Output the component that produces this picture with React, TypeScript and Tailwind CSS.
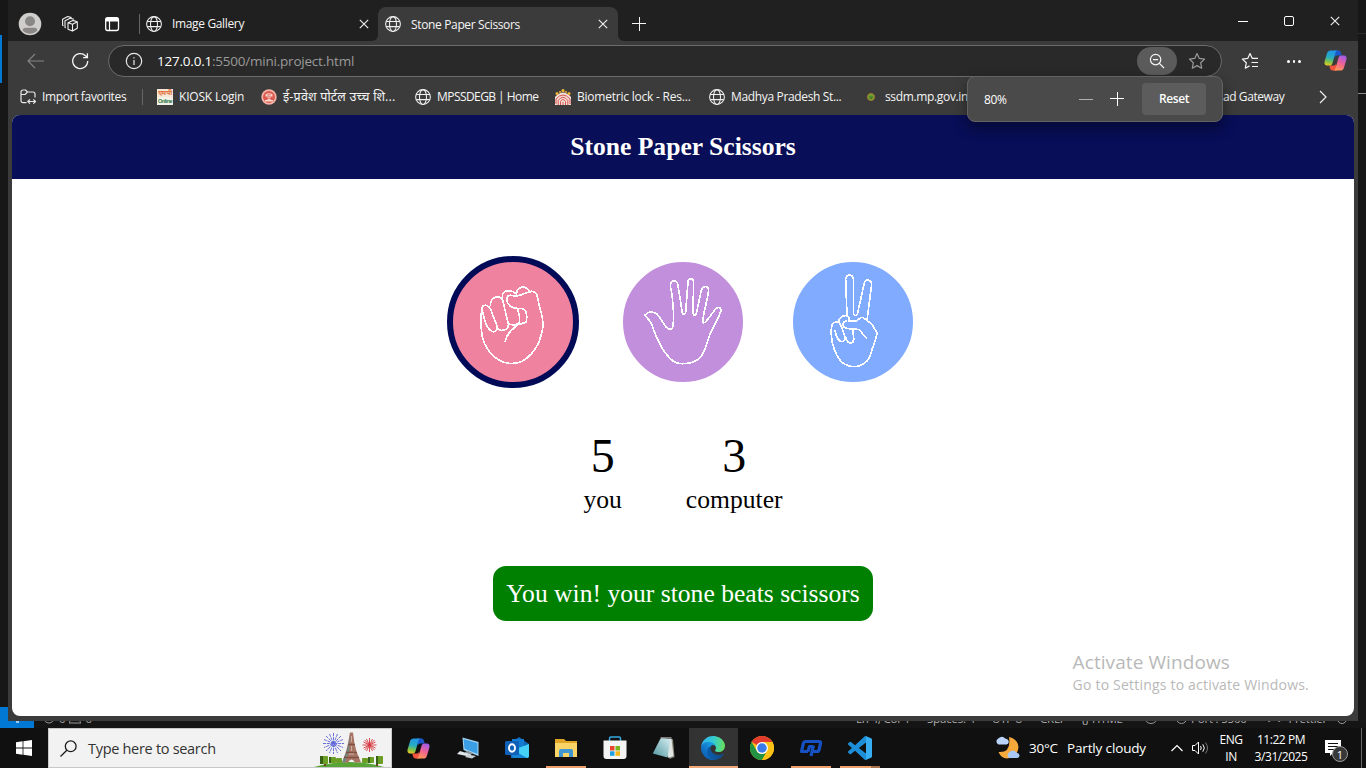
import React from "react";

type P = { className?: string };

const Globe = ({ className = "" }: P) => (
  <svg viewBox="0 0 16 16" className={`h-4 w-4 shrink-0 ${className}`} fill="none" stroke="#f0f0f0" strokeWidth="1.05">
    <circle cx="8" cy="8" r="7.4" />
    <ellipse cx="8" cy="8" rx="3.5" ry="7.4" />
    <path d="M1.2 5.4h13.6M1.2 10.6h13.6" />
  </svg>
);

const Cross = ({ className = "" }: P) => (
  <svg viewBox="0 0 10 10" className={`h-[10px] w-[10px] shrink-0 ${className}`} stroke="#f2f2f2" strokeWidth="1.1">
    <path d="M.8.8l8.4 8.4M9.2.8L.8 9.2" />
  </svg>
);

const Copilot = ({ id }: { id: string }) => (
  <svg viewBox="0 0 24 24" className="h-[23px] w-[23px] shrink-0">
    <defs>
      <linearGradient id={`${id}a`} x1="0.4" y1="0" x2="0.2" y2="1">
        <stop offset="0" stopColor="#2196e8" />
        <stop offset="0.45" stopColor="#28aec0" />
        <stop offset="0.75" stopColor="#86c440" />
        <stop offset="1" stopColor="#f5ca28" />
      </linearGradient>
      <linearGradient id={`${id}b`} x1="0.7" y1="0" x2="0.3" y2="1">
        <stop offset="0" stopColor="#a35bea" />
        <stop offset="0.5" stopColor="#ef6293" />
        <stop offset="1" stopColor="#ff9a55" />
      </linearGradient>
    </defs>
    <path d="M10.5 1.5h4.7c1.4 0 2 .9 2.4 2.1l1 3.1h-4.200c-1.700 0-2.500.8-3 2.300z" fill="#1c57c9" />
    <path d="M13.500 22.500H8.800c-1.400 0-2-.9-2.400-2.100l-1-3.100h4.200c1.700 0 2.500-.8 3-2.300z" fill="#f4533e" />
    <path d="M7.200 1.500h7.300c-1.500 0-2.100 1.100-2.500 2.300L8.900 14.500c-.6 2-1.500 2.800-3.300 2.800H3.300C.9 17.300 0 15.400.6 13.100L3.200 4.500c.6-2 1.800-3 4-3z" fill={`url(#${id}a)`} />
    <path d="M16.800 22.500H9.500c1.500 0 2.100-1.100 2.500-2.300l3.100-10.700c.6-2 1.500-2.800 3.300-2.800h2.300c2.400 0 3.300 1.900 2.700 4.200l-2.600 8.600c-.6 2-1.800 3-4 3z" fill={`url(#${id}b)`} />
  </svg>
);

function TabStrip() {
  return (
    <div className="flex h-[41px] shrink-0 items-center bg-[#202020] text-[12px] text-[#f5f5f5]">
      <svg viewBox="0 0 24 24" className="ml-[10px] mt-[6px] h-6 w-6 shrink-0">
        <circle cx="12" cy="12" r="11.300" fill="#d0cecc" />
        <circle cx="12" cy="9.300" r="5" fill="#8a8886" />
        <path d="M4.700 18.500c0-2 1-2.800 2.800-2.800h9c1.800 0 2.800.8 2.800 2.800a10 10 0 0 1-14.600 0z" fill="#8a8886" />
      </svg>
      <svg viewBox="0 0 18 18" className="ml-[19px] mt-[6px] h-[18px] w-[18px] shrink-0" fill="none" stroke="#f0f0f0" strokeWidth="1.100" strokeLinejoin="round">
        <path d="M7 7.700l4.800-2.300 4.500 1.300v6.600l-4.800 2.800L7 14.300zM7 7.700l4.500 1.600v6.800M11.500 9.300l4.800-2.600" />
        <path d="M4.800 12.800l-.8-.4V5.800l5.200-2.600 3.800 1.100M2.500 10.700l-.9-.500V4.300L6.700 1.500l3.900 1.100" />
      </svg>
      <svg viewBox="0 0 16 16" className="ml-[25px] mt-[6px] h-4 w-4 shrink-0">
        <rect x="1.700" y="1.700" width="12.800" height="12.800" rx="2" fill="none" stroke="#fff" strokeWidth="1.300" />
        <path d="M1.500 5.500V3.500a2 2 0 0 1 2-2h9a2 2 0 0 1 2 2v2z" fill="#fff" />
        <path d="M5.500 5v9" stroke="#fff" strokeWidth="1.200" />
      </svg>
      <div className="ml-[19px] mt-[6px] h-5 w-px bg-[#666]" />
      <Globe className="ml-[6px] mt-[6px]" />
      <span className="ml-[10px] mt-[7px] w-[187px] whitespace-nowrap tracking-[-0.35px]">Image Gallery</span>
      <Cross className="mt-[7px]" />
      <div className="relative ml-[9px] mt-[7px] flex h-[34px] w-[240px] shrink-0 items-center rounded-t-[8px] bg-[#3b3b3b]">
        <svg viewBox="0 0 6 6" className="absolute bottom-0 left-[-6px] h-[6px] w-[6px]"><path d="M6 0v6H0a6 6 0 0 0 6-6z" fill="#3b3b3b" /></svg>
        <svg viewBox="0 0 6 6" className="absolute bottom-0 right-[-6px] h-[6px] w-[6px]"><path d="M0 0v6h6a6 6 0 0 1-6-6z" fill="#3b3b3b" /></svg>
        <Globe className="ml-[7px]" />
        <span className="ml-[10px] mt-px w-[187px] whitespace-nowrap tracking-[-0.35px]">Stone Paper Scissors</span>
        <Cross />
      </div>
      <svg viewBox="0 0 14 14" className="ml-[14px] mt-[6px] h-[14px] w-[14px] shrink-0" stroke="#f5f5f5" strokeWidth="1">
        <path d="M0 6.500h14M7.500 0v14" />
      </svg>
      <div className="flex-1" />
      <div className="mt-[2px] h-px w-[10px] bg-white" />
      <div className="ml-[36px] mt-px h-[10px] w-[10px] rounded-[2px] border border-white" />
      <Cross className="ml-[36px] mr-[18px] mt-px" />
    </div>
  );
}

function Toolbar() {
  return (
    <div className="flex h-[36px] shrink-0 items-start bg-[#3b3b3b] pt-[4px]">
      <svg viewBox="0 0 17 16" className="ml-[19px] mt-[8px] h-4 w-[17px] shrink-0" fill="none" stroke="#858585" strokeWidth="1.100">
        <path d="M17 8H1M8 1L1 8l7 7" />
      </svg>
      <svg viewBox="0 0 18 18" className="ml-[27px] mt-[7px] h-[18px] w-[18px] shrink-0" fill="none" stroke="#f5f5f5" strokeWidth="1.300">
        <path d="M16.700 9a7.500 7.500 0 1 1-2.200-5.200L16.200 5.500M16.400 1.300v4.400h-4.300" />
      </svg>
      <div className="ml-[19px] flex h-[32px] w-[1114px] shrink-0 items-center rounded-full border border-[#6b6b6b] bg-[#292929]">
        <svg viewBox="0 0 18 18" className="ml-[16px] h-[18px] w-[18px] shrink-0" fill="none" stroke="#e8e8e8" strokeWidth="1.200">
          <circle cx="9" cy="9" r="7.700" />
          <path d="M9 8v5M9 5.200v1.400" />
        </svg>
        <span className="ml-[14px] flex-1 whitespace-nowrap text-[13.500px] tracking-[-0.220px] text-[#9a9a9a]">
          <span className="text-white">127.0.0.1</span>:5500/mini.project.html
        </span>
        <div className="flex h-[28px] w-[40px] shrink-0 items-center justify-center rounded-full bg-[#5b5b5b]">
          <svg viewBox="0 0 16 16" className="h-4 w-4" fill="none" stroke="#f5f5f5" strokeWidth="1.200">
            <circle cx="6.600" cy="6.600" r="5.200" />
            <path d="M10.400 10.400L15 15M4 6.600h5.200" />
          </svg>
        </div>
        <svg viewBox="0 0 18 18" className="ml-[11px] mr-[15px] h-[18px] w-[18px] shrink-0" fill="none" stroke="#9a9a9a" strokeWidth="1.200" strokeLinejoin="round">
          <path d="M9 1.500l2.300 4.900 5.300.7-3.900 3.700 1 5.400L9 13.600l-4.700 2.600 1-5.400L1.400 7.100l5.300-.7z" />
        </svg>
      </div>
      <svg viewBox="0 0 18 18" className="ml-[19px] mt-[7px] h-[18px] w-[18px] shrink-0" fill="none" stroke="#f5f5f5" strokeWidth="1.200" strokeLinejoin="round">
        <path d="M11.300 6.400L9 1.500 6.700 6.400l-5.300.7 3.900 3.700-1 5.400L8.500 13.900M11 6.400h6M10.500 10.500H17M11 14.500h6" />
      </svg>
      <div className="ml-[28px] mt-[15px] flex shrink-0 gap-[3px]">
        <i className="h-[2.500px] w-[2.500px] rounded-full bg-white" />
        <i className="h-[2.500px] w-[2.500px] rounded-full bg-white" />
        <i className="h-[2.500px] w-[2.500px] rounded-full bg-white" />
      </div>
      <div className="ml-[23px] mt-[4px]">
        <Copilot id="cb" />
      </div>
    </div>
  );
}

function Bookmarks() {
  return (
    <div className="flex h-[38px] shrink-0 items-center overflow-hidden whitespace-nowrap bg-[#3b3b3b] text-[12px] tracking-[-0.350px] text-[#f5f5f5]">
      <svg viewBox="0 0 17 16" className="ml-[12px] mt-px h-4 w-[17px] shrink-0" fill="none" stroke="#e8e8e8" strokeWidth="1.200" strokeLinejoin="round">
        <path d="M6.500 13.700H3a2 2 0 0 1-2-2V3a2 2 0 0 1 2-2h2.500l2 2h5.500a2 2 0 0 1 2 2v3.500M1 5.500h4L7.500 3M8.300 12.500h6.500M10 10.300l-2.200 2.200 2.200 2.200M13.300 10.300l2.200 2.200-2.200 2.200" />
      </svg>
      <span className="ml-[5px] mt-[2px] w-[100px] shrink-0">Import favorites</span>
      <div className="mt-[2px] h-4 w-px shrink-0 bg-[#666]" />
      <div className="ml-[14px] mt-[2px] flex h-4 w-4 shrink-0 flex-col overflow-hidden bg-[#f4f0e8] text-center leading-none">
        <span className="h-[8px] bg-[#f8e6d6] font-['Noto_Sans',sans-serif] text-[6.500px] font-bold leading-[8px] tracking-[-0.600px] text-[#e06a35]">एम पी</span>
        <span className="font-['Liberation_Sans',sans-serif] text-[5.500px] font-bold leading-[8px] tracking-[-0.500px] text-[#2d7a3c]">Online</span>
      </div>
      <span className="ml-[6px] mt-[2px] w-[82px] shrink-0 tracking-[-0.200px]">KIOSK Login</span>
      <svg viewBox="0 0 16 16" className="mt-[2px] h-4 w-4 shrink-0">
        <circle cx="8" cy="8" r="7.700" fill="#f4b2a8" />
        <circle cx="8" cy="8" r="6" fill="#dc5a50" />
        <path d="M4.500 5.500q3.500-3 7 0v2h-2V11h2.500v1.500H4V11h2.500V7.500h-2z" fill="#f8d8cd" />
        <path d="M7 5h2v3H7zM5 9.500h6" stroke="#dc4b42" strokeWidth=".6" fill="none" />
      </svg>
      <span className="ml-[6px] mt-[2px] w-[132px] shrink-0 text-[12.500px] tracking-[0.220px]">ई-प्रवेश पोर्टल उच्च शि...</span>
      <Globe className="mt-[2px]" />
      <span className="ml-[6px] mt-[2px] w-[118px] shrink-0 tracking-[-0.560px]">MPSSDEGB | Home</span>
      <svg viewBox="0 0 16 16" className="mt-[2px] h-4 w-4 shrink-0" fill="none">
        <path d="M0 16V8q8-9 16 0v8z" fill="#f3ded7" />
        <g stroke="#d5534f" strokeWidth="1">
          <path d="M1 15V10q7-8 14 0v5M3.200 16v-4.500q4.800-6.500 9.600 0V16M5.500 16v-3.500q2.500-4 5 0V16M8 13v3" />
        </g>
        <g fill="#f2b634">
          <circle cx="2" cy="4.500" r="1.500" />
          <circle cx="8" cy="1.600" r="1.600" />
          <circle cx="14" cy="4.500" r="1.500" />
          <circle cx="5" cy="3" r="1" />
          <circle cx="11" cy="3" r="1" />
        </g>
      </svg>
      <span className="ml-[6px] mt-[2px] w-[132px] shrink-0 tracking-[-0.220px]">Biometric lock - Res...</span>
      <Globe className="mt-[2px]" />
      <span className="ml-[6px] mt-[2px] w-[136px] shrink-0">Madhya Pradesh St...</span>
      <svg viewBox="0 0 8 8" className="mt-[2px] h-2 w-2 shrink-0">
        <circle cx="4" cy="4" r="3.500" fill="#69a334" stroke="#a8772d" />
        <path d="M2 4h4M3 5.300h2" stroke="#315f22" strokeWidth=".8" />
      </svg>
      <span className="ml-[10px] mt-[2px] w-[338px] shrink-0">ssdm.mp.gov.in</span>
      <span className="mt-[2px] w-[96px] shrink-0 tracking-[-0.420px]">ad Gateway</span>
      <svg viewBox="0 0 8 14" className="mt-[2px] h-[14px] w-2 shrink-0" fill="none" stroke="#f0f0f0" strokeWidth="1.200">
        <path d="M1 1l6 6-6 6" />
      </svg>
    </div>
  );
}

function ZoomPopup() {
  return (
    <div className="absolute left-[959px] top-[76px] flex h-[46px] w-[256px] items-center rounded-[8px] border border-[#636363] bg-[#4a4a4a] text-[12px] text-white shadow-[0_6px_14px_rgba(0,0,0,0.4)]">
      <span className="ml-[16px] mt-px w-[95px] tracking-[-0.400px]">80%</span>
      <div className="h-px w-[14px] bg-[#b0b0b0]" />
      <svg viewBox="0 0 14 14" className="ml-[17px] h-[14px] w-[14px]" stroke="#fff" strokeWidth="1">
        <path d="M0 6.500h14M7.500 0v14" />
      </svg>
      <div className="ml-[18px] flex h-8 w-[64px] items-center justify-center rounded-[4px] bg-[#5c5c5c] font-semibold tracking-[-0.400px]">Reset</div>
    </div>
  );
}

const Fist = () => (
  <path d="M127 170c7-8 20-3 24 6l20 52c4 12-6 20-15 16-12-5-20-25-24-42l-5-20M151 168c0-10 4-22 14-26 12-3 20 0 23 9l17 70c2 14-8 21-21 20-8-1-13-6-15-13M188 144c-4-12 5-22 19-22 12 0 18 6 25 12M230 134c-2-12 7-24 22-23 10 1 13 8 19 17M205 221c12 5 24 4 31-2 6-6 2-18 1-28l-5-16M272 124c-16 5-30 13-44 14-11 0-20-6-25 1-6 9-1 24 10 31 14 10 26 2 38 7 10 6 10 25 8 39-8 5-24 4-33 14-16 13-28 26-31 47M268 125c8-3 18 0 22 8 6 18 7 38 14 56 4 15 8 38 1 61-8 36-26 61-49 78-21 15-56 17-80 2-28-18-48-49-51-83-3-26-3-52 2-77" />
);

const Palm = () => (
  <path d="M107 195c5-10 20-9 30-6 10 6 22 29 30 41 9 10 20 10 22-2 4-30 0-85-8-121 0-15 15-20 22-6l14 87c2 7 8 6 10-1l7-92c2-12 15-12 17 0l-2 90c0 14 9 13 11 1l14-66c4-15 22-12 22 0-2 23-15 65-18 94 0 6 4 5 9 2l28-37c5-9 19-9 18 3-11 31-25 50-34 74-9 25-13 46-26 64-13 15-31 22-60 21-20-1-31-13-43-27-22-26-33-57-44-88-4-15-14-19-21-31z" />
);

const Victory = () => (
  <path d="M201 196l-4-108c2-17 20-17 23-2l1 106c2 5 8 6 11 0 8-31 15-68 21-94 5-13 23-8 22 5l-14 108M201 213c-10-2-16 10-8 19 12 8 30 3 45 7 9 7 10 18 22 26M203 212l24 2c8-4 13-13 20-12 11 4 17 14 27 19l17 26c-2 22-13 42-17 59-6 25-19 36-36 42-21 5-44-1-55-14-15-18-27-47-29-79-2-23 2-39 12-38 5 0 8-4 12 0 7 13 11 22 18 47-4 15-14 13-21 4-5-7-8-15-10-28M176 213c2-11 12-17 22-16 9 0 10 6 10 13M196 260c4 13 8 21 18 20 12-4 6-22 4-42" />
);

function Choice({ bg, children }: { bg: string; children: React.ReactNode }) {
  return (
    <div className={`h-[132px] w-[132px] rounded-full border-[6px] ${bg}`}>
      <svg viewBox="39 36 360 360" className="h-[120px] w-[120px]" fill="none" stroke="#fff" strokeWidth="5" strokeLinejoin="round" shapeRendering="crispEdges">
        {children}
      </svg>
    </div>
  );
}

function Game() {
  return (
    <div className="flex h-[601px] w-[1342px] flex-col items-center overflow-hidden rounded-[8px] bg-white font-['Liberation_Serif',serif]">
      <h1 className="flex h-[64px] w-full shrink-0 items-center justify-center bg-[#080e57] text-[25.600px] font-bold text-white">Stone Paper Scissors</h1>
      <div className="mt-[77px] flex gap-[38px]">
        <Choice bg="border-[#000a57] bg-[#ef829f]"><Fist /></Choice>
        <Choice bg="border-white bg-[#c28fdc]"><Palm /></Choice>
        <Choice bg="border-white bg-[#80abff]"><Victory /></Choice>
      </div>
      <div className="mt-[40px] flex gap-[64px] text-center text-[25.600px] leading-[29px] text-black">
        <div>
          <p className="text-[48px] leading-[55px]">5</p>
          <p className="mt-[2px]">you</p>
        </div>
        <div>
          <p className="text-[48px] leading-[55px]">3</p>
          <p className="mt-[2px]">computer</p>
        </div>
      </div>
      <p className="mt-[52px] rounded-[13px] bg-[#008000] p-[13px] text-[25.600px] leading-[29px] text-white">You win! your stone beats scissors</p>
      <div className="mr-[45px] mt-[30px] self-end whitespace-nowrap font-['Open_Sans',sans-serif] text-[#b9b9b9]">
        <p className="text-[19px] leading-[22px] tracking-[0.080px]">Activate Windows</p>
        <p className="text-[14px] leading-[23px] tracking-[0.200px]">Go to Settings to activate Windows.</p>
      </div>
    </div>
  );
}

function StatusBar() {
  return (
    <div className="flex h-[7px] shrink-0 items-end overflow-hidden whitespace-nowrap bg-[#151515] text-[11.500px] leading-[18px] tracking-[-0.200px] text-[#b0b0b0]">
      <div className="flex h-[7px] w-[34px] items-start justify-center bg-[#0078d4]">
        <i className="h-[2px] w-[3px] bg-[#9dccee]" />
      </div>
      <div className="ml-[9px] flex h-[18px] w-[813px] items-center gap-[4px]">
        <svg viewBox="0 0 12 12" className="h-3 w-3" fill="none" stroke="#999"><circle cx="6" cy="5" r="5" /></svg>0
        <svg viewBox="0 0 12 12" className="h-3 w-3" fill="none" stroke="#999"><path d="M6 0l6 10H0z" /></svg>0
      </div>
      <span className="w-[71px]">Ln 4, Col 4</span>
      <span className="w-[65px]">Spaces: 4</span>
      <span className="w-[48px]">UTF-8</span>
      <span className="w-[41px]">CRLF</span>
      <span className="w-[63px]">{"{}"} HTML</span>
      <span className="mb-[4px] mr-[18px] h-[14px] w-[14px] rounded-full border border-[#999]" />
      <span className="mb-[4px] mr-[4px] h-[12px] w-[11px] rounded-full border border-[#999]" />
      <span className="w-[75px]">Port : 5500</span>
      <span className="w-[71px]">✓✓ Prettier</span>
      <span className="mb-[4px] h-[12px] w-[10px] rounded-full border border-[#999]" />
    </div>
  );
}

const Paris = () => (
  <svg viewBox="0 0 70 38" className="h-[38px] w-[70px] shrink-0">
    <path d="M0 38q36-10 70 0z" fill="#58a436" />
    <path d="M11 33v4M63 33v4" stroke="#6b4428" strokeWidth="2" />
    <g fill="#6a9e24">
      <rect x="6" y="27" width="8" height="8" rx="1" /><rect x="15" y="28" width="7" height="6" rx="1" /><rect x="22" y="29" width="6" height="5" rx="1" />
      <rect x="48" y="29" width="6" height="5" rx="1" /><rect x="54" y="28" width="6" height="6" rx="1" /><rect x="62" y="27" width="7" height="8" rx="1" />
    </g>
    <path d="M6 27h3v8H6zM15 28h2v6h-2zM54 28h2v6h-2zM62 27h2v8h-2z" fill="#365f18" />
    <path d="M36 3.500h3l1.500 11 2 8 4.500 11h-6q-3.500-6-7 0h-6l4-11 2-8z" fill="#a87564" />
    <path d="M36 3.500l-1.500 11-2 8-4.500 11h3l4-12z" fill="#6e8582" />
    <path d="M34 15.500h7M32 23.500h11M30 28.500h15" stroke="#7f5145" strokeWidth="1.300" />
    <path d="M37.500 7v6M37.500 17v5M35 25h5" stroke="#d8bfb2" strokeWidth=".8" />
    <g stroke="#5a63d6" strokeWidth=".9" strokeDasharray="3 .8">
      <path d="M19.500 4v21M9 14.500h21M12 7l15 15M27 7L12 22M15.500 5l8 19M23.500 5l-8 19M10 10.500l19 8M29 10.500l-19 8" />
    </g>
    <g stroke="#d8363f" strokeWidth=".9">
      <path d="M55.500 9v14M48.500 16h14M50.500 11l10 10M60.500 11L50.500 21M52.500 10l6 12M58.500 10l-6 12M49.500 13l12 6M61.500 13l-12 6" />
    </g>
  </svg>
);

const Chrome = () => (
  <svg viewBox="0 0 48 48" className="h-6 w-6">
    <circle cx="24" cy="24" r="24" fill="#fbc116" />
    <path d="M24 24L3.200 12A24 24 0 0 1 44.800 12H24z" fill="#e33b2e" />
    <path d="M3.200 12L13.600 30A12 12 0 0 0 34.400 30L24 48A24 24 0 0 1 3.200 12z" fill="#229342" />
    <path d="M24 48l10.400-18A12 12 0 0 0 34.400 18 12 12 0 0 0 24 12h20.800A24 24 0 0 1 24 48z" fill="#fbc116" />
    <circle cx="24" cy="24" r="12" fill="#fff" />
    <circle cx="24" cy="24" r="9.500" fill="#3a7bea" />
  </svg>
);

const Edge = () => (
  <svg viewBox="0 0 256 256" className="h-6 w-6">
    <defs>
      <linearGradient id="e1" x1="0.2" y1="0.5" x2="1" y2="0.5"><stop stopColor="#0c59a4" /><stop offset="1" stopColor="#114a8b" /></linearGradient>
      <linearGradient id="e2" x1="0.8" y1="0.2" x2="0.3" y2="1"><stop stopColor="#1b9de2" /><stop offset=".5" stopColor="#1276c9" /><stop offset="1" stopColor="#0a5cb0" /></linearGradient>
      <linearGradient id="e3" x1="0" y1="0.4" x2="1" y2="0.5"><stop stopColor="#2fb3ee" /><stop offset=".5" stopColor="#35cbd2" /><stop offset="1" stopColor="#66e05b" /></linearGradient>
    </defs>
    <path fill="url(#e1)" d="M235.680 190.480c-3.400 1.780-6.930 3.330-10.540 4.630a101.900 101.900 0 0 1-35.860 6.480c-47.260 0-88.430-32.500-88.430-74.220a31.480 31.480 0 0 1 16.430-27.300c-42.800 1.800-53.800 46.400-53.800 72.530 0 73.880 68.090 81.370 82.760 81.370 7.910 0 19.840-2.300 27-4.560l1.310-.44a128.340 128.340 0 0 0 66.600-52.800 4 4 0 0 0-5.470-5.690z" />
    <path fill="url(#e2)" d="M105.730 241.420a79.200 79.200 0 0 1-22.740-21.340 80.720 80.720 0 0 1 29.500-120c3.120-1.470 8.450-4.130 15.540-4a32.350 32.350 0 0 1 25.690 13 31.880 31.880 0 0 1 6.360 18.660c0-.21 24.460-79.600-80-79.600-43.900 0-80 41.660-80 78.210a130.150 130.150 0 0 0 12.110 56 128 128 0 0 0 156.380 67.110 75.550 75.550 0 0 1-62.780-8z" />
    <path fill="url(#e3)" d="M152.330 148.860c-.81 1.050-3.300 2.500-3.300 5.660 0 2.610 1.700 5.120 4.720 7.230 14.380 10 41.490 8.680 41.560 8.680a59.560 59.560 0 0 0 30.270-8.350 61.380 61.380 0 0 0 30.430-52.880c.26-22.410-8-37.310-11.340-43.910C223.450 23.920 177.720 0 128 0A128 128 0 0 0 0 126.200c.48-36.540 36.800-66.050 80-66.050 3.500 0 23.460.34 42 10.070 16.340 8.580 24.900 18.940 30.850 29.210 6.180 10.670 7.280 24.150 7.280 29.520s-2.740 13.330-7.800 19.910z" />
  </svg>
);

function TaskItem({ children, active, bar }: { children: React.ReactNode; active?: boolean; bar?: string }) {
  return (
    <div className={`flex h-[40px] w-[49px] shrink-0 flex-col items-center ${active ? "bg-[#333]" : ""}`}>
      <div className="flex h-[38px] items-center pr-[2px] pt-[2px]">{children}</div>
      <div className={`h-[2px] ${bar ?? ""}`} />
    </div>
  );
}

function Taskbar() {
  return (
    <div className="flex h-[40px] shrink-0 items-center whitespace-nowrap bg-[#101010] text-white">
      <svg viewBox="0 0 16 16" className="ml-[16px] h-4 w-4 shrink-0" fill="#fff">
        <path d="M0 2.200L6.600 1.300v6.300H0zM7.400 1.200L16 0v7.600H7.400zM0 8.400h6.600v6.300L0 13.800zM7.400 8.400H16V16l-8.600-1.200z" />
      </svg>
      <div className="ml-[16px] flex h-[40px] w-[344px] shrink-0 items-center border border-[#c8c8c8] bg-[#f2f2f2]">
        <svg viewBox="0 0 17 17" className="ml-[11px] h-[17px] w-[17px]" fill="none" stroke="#1c1c1c" strokeWidth="1.300">
          <circle cx="10.700" cy="6.300" r="5.400" />
          <path d="M6.800 10.200L.5 16.500" />
        </svg>
        <span className="ml-[11px] mt-px w-[226px] text-[14.500px] tracking-[-0.300px] text-[#333]">Type here to search</span>
        <Paris />
      </div>
      <div className="ml-[3px] flex">
        <TaskItem><Copilot id="tb" /></TaskItem>
        <TaskItem>
          <svg viewBox="0 0 24 24" className="h-6 w-6">
            <path d="M6.500 1.500L22.500 6v14L7.500 14z" fill="#a9d8f5" />
            <path d="M7.500 3L21.500 7v11L8.500 12.800z" fill="#3c9fe6" />
            <path d="M11 14.500l6 2.500-3 2.500-6-2z" fill="#88959c" />
            <path d="M4 15l11 3.500-2 2L1 18z" fill="#dfe6e8" />
            <path d="M12 18.500l8 1.500-4 2.500-7-1.500z" fill="#c8d0d4" />
          </svg>
        </TaskItem>
        <TaskItem>
          <svg viewBox="0 0 24 24" className="h-6 w-6">
            <path d="M4 8l10-7 10 7v12a2 2 0 0 1-2 2H6z" fill="#1266b6" />
            <path d="M7 3h12v12H7z" fill="#127cd2" />
            <path d="M8 14L24 8v12a2 2 0 0 1-2 2H8z" fill="#45d0f5" />
            <path d="M8 14l14 8H9a2 2 0 0 1-2-2z" fill="#1685d8" />
            <rect x="0" y="5" width="14" height="14" rx="1.500" fill="#1160b7" />
            <ellipse cx="7" cy="12" rx="3" ry="3.700" fill="none" stroke="#fff" strokeWidth="1.900" />
          </svg>
        </TaskItem>
        <TaskItem bar="mr-[2px] w-10 bg-[#eea06c]">
          <svg viewBox="0 0 22 20" className="h-5 w-[22px]">
            <path d="M0 1h9l2 2h11v16H0z" fill="#e0a526" />
            <path d="M0 5h22v14H0z" fill="#fbd468" />
            <path d="M4 19v-6q0-2 2-2h10q2 0 2 2v6h-4v-4H8v4z" fill="#3f96d1" />
          </svg>
        </TaskItem>
        <TaskItem>
          <svg viewBox="0 0 24 24" className="h-6 w-6">
            <path d="M6.500 6V2.500Q6.500 1 8 1h8q1.500 0 1.500 1.500V6" fill="none" stroke="#35a8e0" strokeWidth="1.500" />
            <path d="M.5 4.500h23V20a3 3 0 0 1-3 3h-17a3 3 0 0 1-3-3z" fill="#f4f4f4" />
            <path d="M7 10h4.500v4.500H7z" fill="#e8452c" /><path d="M12.500 10H17v4.500h-4.500z" fill="#7ab51d" /><path d="M7 15.300h4.500v4.500H7z" fill="#1e9fe0" /><path d="M12.500 15.300H17v4.500h-4.500z" fill="#f7b516" />
          </svg>
        </TaskItem>
        <TaskItem>
          <svg viewBox="0 0 24 24" className="h-6 w-6">
            <defs><linearGradient id="np" x1="0" y1="1" x2="1" y2="0"><stop stopColor="#4f959d" /><stop offset="1" stopColor="#d5eef2" /></linearGradient></defs>
            <path d="M18 2l3 1.500 1.500 17.500-5 2z" fill="#8d8a7c" />
            <path d="M9 2l10.500 1L21.500 20l-5 2z" fill="#dfe5e2" />
            <path d="M8.500 2.500l10 .5-3 18.500L.8 17.500z" fill="url(#np)" />
            <path d="M8.500 1.800h11" stroke="#999" strokeWidth="1.200" />
          </svg>
        </TaskItem>
        <TaskItem active bar="w-full bg-[#f0a878]"><Edge /></TaskItem>
        <TaskItem><Chrome /></TaskItem>
        <TaskItem bar="mr-[2px] w-10 bg-[#eea06c]">
          <svg viewBox="0 0 24 18" className="h-[18px] w-6" fill="none" stroke="#1651c4" strokeWidth="3.200" strokeLinejoin="round">
            <path d="M9 12.500H2.500L4.500 4q.5-1.500 2-1.500H20q2 0 1.500 2L20 11q-.4 1.500-2 1.500h-4M14.500 6.500L12 17M9 12.500l1.500-5h4" />
          </svg>
        </TaskItem>
        <TaskItem bar="mr-[2px] w-10 border-r-[9px] border-[#a87450] bg-[#eea06c]">
          <svg viewBox="0 0 24 24" className="h-6 w-6">
            <path fill="#1d8fd8" d="M23.150 2.587L18.210.21a1.494 1.494 0 0 0-1.705.29l-9.460 8.630-4.120-3.128a.999.999 0 0 0-1.276.057L.327 7.261A1 1 0 0 0 .326 8.740L3.899 12 .326 15.260a1 1 0 0 0 .001 1.479L1.650 17.940a.999.999 0 0 0 1.276.057l4.120-3.128 9.460 8.630a1.492 1.492 0 0 0 1.704.29l4.942-2.377A1.500 1.500 0 0 0 24 20.060V3.939a1.500 1.500 0 0 0-.85-1.352zm-5.146 14.861L10.826 12l7.178-5.448v10.896z" />
            <path fill="#37adf2" d="M18 .2l5.200 2.400q.8.500.8 1.400v16q0 .9-.8 1.400L18 23.800z" />
          </svg>
        </TaskItem>
      </div>
      <svg viewBox="0 0 26 24" className="ml-[110px] h-6 w-[26px] shrink-0">
        <path d="M14 1q9 2 9.500 10.500Q22 22 12 22.500q-6-.5-8.500-6.500 13 1 10.500-15z" fill="#f5a93a" />
        <path d="M3.500 8.500a3.300 3.300 0 0 1-.3-6q4-3.500 7 0 4 1 3.500 4-.5 2-2.500 2z" fill="#b9d3fa" />
        <path d="M14 22a3.300 3.300 0 0 1 0-5.500q4-4 7.500 0 3.500 1 3 3.500-.5 2-2.500 2z" fill="#a9c8f8" />
      </svg>
      <span className="ml-[8px] w-[38px] shrink-0 text-[13.500px] tracking-[-0.250px]">30°C</span>
      <span className="w-[104px] shrink-0 text-[13.500px] tracking-[-0.150px]">Partly cloudy</span>
      <svg viewBox="0 0 12 8" className="h-2 w-3 shrink-0" fill="none" stroke="#fff" strokeWidth="1.200"><path d="M.5 7L6 1.500 11.500 7" /></svg>
      <svg viewBox="0 0 18 14" className="ml-[9px] h-[14px] w-[18px] shrink-0" fill="none" stroke="#fff" strokeWidth="1">
        <path d="M.5 4.500H3L6.500 1v12L3 9.500H.5zM8.500 5q1.500 2 0 4M10.800 3.300q3 3.700 0 7.400" />
        <path d="M13.500 1.500q4 5.500 0 11" stroke="#777" />
      </svg>
      <div className="ml-[5px] w-[32px] shrink-0 text-center text-[12px] leading-[17px] tracking-[-0.500px]">ENG<br />IN</div>
      <div className="ml-[5px] w-[58px] shrink-0 text-center text-[12px] leading-[17px] tracking-[-0.450px]">11:22 PM<br />3/31/2025</div>
      <div className="relative ml-[15px] mt-[4px] h-[22px] w-[26px] shrink-0">
        <svg viewBox="0 0 16 17" className="h-[17px] w-4" fill="#fff">
          <path d="M0 1h16v13H8l-3 3v-3H0z" />
          <path d="M3 4.500h10M3 7.500h10M3 10.500h6" stroke="#111" />
        </svg>
        <div className="absolute left-[7px] top-[7px] flex h-4 w-4 items-center justify-center rounded-full border border-[#999] bg-[#383838] text-[11px] leading-none">1</div>
      </div>
      <div className="ml-[10px] h-full w-px bg-[#666]" />
    </div>
  );
}

export default function App() {
  return (
    <div className="flex h-[768px] w-[1366px] flex-col overflow-hidden bg-[#181818] font-['Open_Sans','Noto_Sans',sans-serif]">
      <div className="flex h-[721px] shrink-0">
        <div className="flex w-2 shrink-0 flex-col bg-[#171717]">
          <div className="mt-[35px] h-[48px] w-[2px] bg-[#0078d4]" />
          <div className="mt-auto h-[14px] bg-[#0078d4]" />
        </div>
        <div className="relative flex w-[1350px] shrink-0 flex-col items-center bg-[#3b3b3b]">
          <div className="w-full"><TabStrip /><Toolbar /><Bookmarks /></div>
          <Game />
          <ZoomPopup />
        </div>
        <div className="flex w-2 shrink-0 flex-col bg-[#171717]">
          <div className="h-[34px] border-b border-[#2b2b2b]" />
          <div className="h-[36px] border-b border-[#2b2b2b]" />
          <div className="h-[24px] border-b border-[#8a8a8a]" />
        </div>
      </div>
      <StatusBar />
      <Taskbar />
    </div>
  );
}
